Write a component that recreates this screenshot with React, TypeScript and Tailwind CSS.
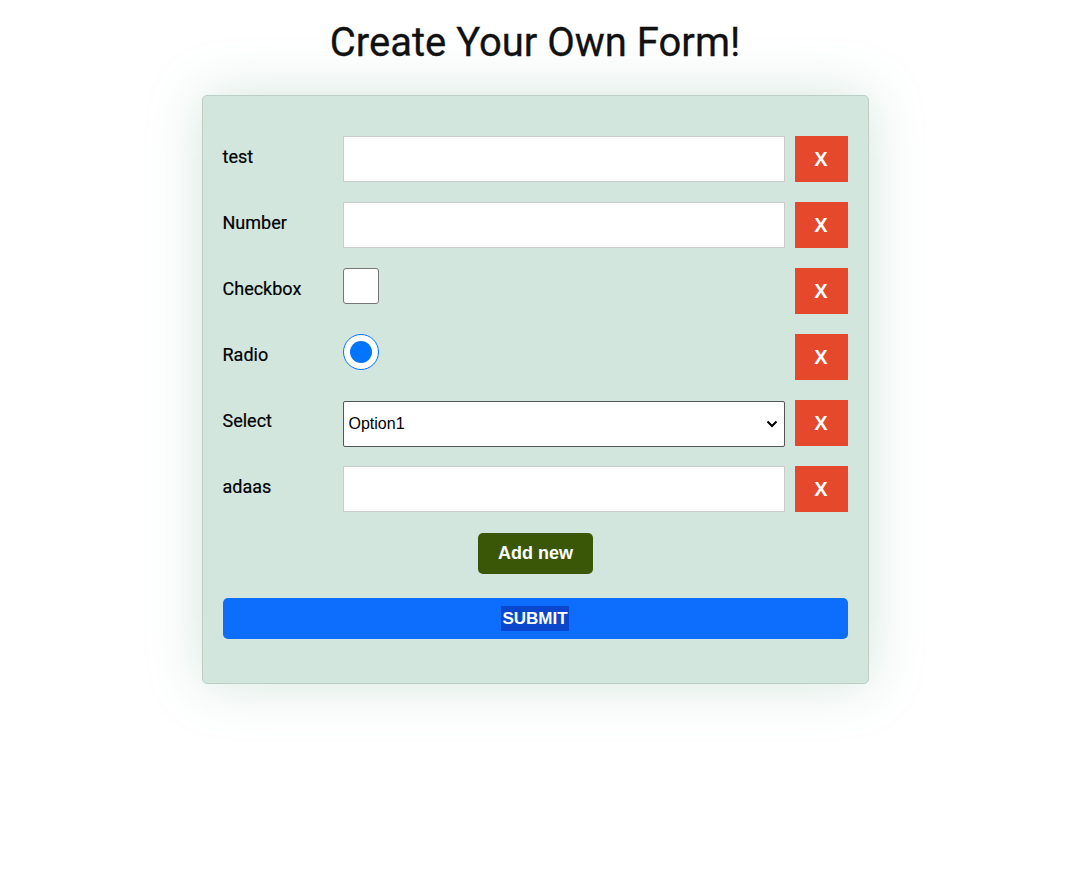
import { useState } from "react"

type Field = { label: string; type: "text" | "number" | "checkbox" | "radio" | "select" }

const initialFields: Field[] = [
  { label: "test", type: "text" },
  { label: "Number", type: "number" },
  { label: "Checkbox", type: "checkbox" },
  { label: "Radio", type: "radio" },
  { label: "Select", type: "select" },
  { label: "adaas", type: "text" },
]

function FieldInput({ type }: { type: Field["type"] }) {
  if (type === "checkbox") {
    return (
      <div className="flex-1">
        <div className="w-[36px] h-[36px] bg-white border border-[#767676] rounded-[3px]" />
      </div>
    )
  }
  if (type === "radio") {
    return (
      <div className="flex-1">
        <div className="w-[36px] h-[36px] rounded-full border border-[#0075ff] bg-white flex items-center justify-center">
          <div className="w-[22px] h-[22px] rounded-full bg-[#0075ff]" />
        </div>
      </div>
    )
  }
  if (type === "select") {
    return (
      <div className="flex-1 h-[46px] mt-[1px] bg-white border border-[#555] rounded-[2px] flex items-center justify-between pl-[5px] pr-[6px] font-['Liberation_Sans',Arial,sans-serif] text-[16px] text-black">
        <span>Option1</span>
        <svg width="12" height="8" viewBox="0 0 12 8">
          <path d="M1.5 1.5 L6 6 L10.5 1.5" fill="none" stroke="#000" strokeWidth="2" />
        </svg>
      </div>
    )
  }
  return <input type="text" className="flex-1 h-[46px] bg-white border border-[#ccc] outline-none px-2" />
}

export default function App() {
  const [fields] = useState(initialFields)

  return (
    <div className="min-h-[870px] bg-white font-['Roboto',sans-serif] flex flex-col items-center pr-[6px]">
      <h1 className="mt-[18px] text-[40px] leading-[50px] text-[#111] [-webkit-text-stroke:0.3px_#111]">Create Your Own Form!</h1>

      <div className="mt-[27px] w-[667px] bg-[#d2e6de] border border-[#bccfc6] rounded-[5px] shadow-[0_0_55px_rgba(100,170,135,0.28)] pt-[40px] pb-[44px] pl-[19px] pr-[20px]">
        <div className="flex flex-col gap-[20px]">
          {fields.map((f, i) => (
            <div key={i} className="flex items-start h-[46px]">
              <label className="w-[121px] pl-[1px] pt-[7px] text-[18px] text-black [-webkit-text-stroke:0.2px_#000]">{f.label}</label>
              <FieldInput type={f.type} />
              <button className="ml-[10px] w-[53px] h-[46px] bg-[#e5482b] text-white font-bold text-[20px] font-['Liberation_Sans',Arial,sans-serif]">
                X
              </button>
            </div>
          ))}
        </div>

        <div className="flex justify-center mt-[21px] pl-[2px]">
          <button className="w-[115px] h-[41px] rounded-[5px] bg-[#3a5708] text-white font-bold text-[18px] font-['Liberation_Sans',Arial,sans-serif]">
            Add new
          </button>
        </div>

        <button className="mt-[24px] w-[625px] ml-[1px] h-[41px] rounded-[5px] bg-[#0d6efd] text-white font-bold text-[17px] font-['Liberation_Sans',Arial,sans-serif] flex items-center justify-center">
          <span className="bg-[#0a47cd] px-[1px]">SUBMIT</span>
        </button>
      </div>
    </div>
  )
}
